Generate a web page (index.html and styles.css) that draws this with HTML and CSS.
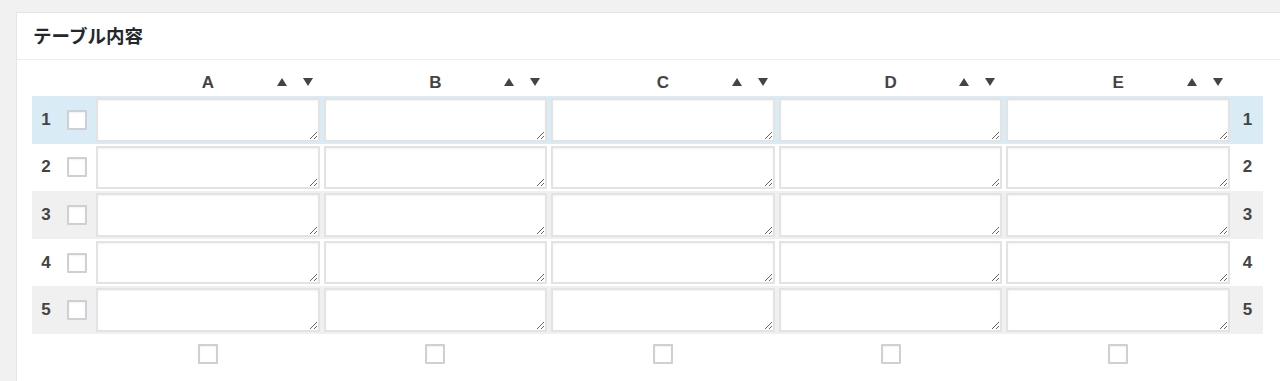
FILE: index.html
```html
<!DOCTYPE html>
<html>
<head>
	<meta charset="utf-8">
	<title>テーブル内容</title>
	<link rel="stylesheet" href="styles.css">
</head>
<body>
	<div class="postbox">
		<h2 class="postbox-title">テーブル内容</h2>

		<div class="inside">
			<table class="grid-table">
				<colgroup>
					<col class="col-num">
					<col class="col-check">
					<col class="col-data">
					<col class="col-data">
					<col class="col-data">
					<col class="col-data">
					<col class="col-data">
					<col class="col-num-right">
				</colgroup>

				<thead>
					<tr>
						<th></th>
						<th></th>
						<th><div class="col-head"><span></span><span class="col-name">A</span><span class="sort"><i class="up"></i><i class="down"></i></span></div></th>
						<th><div class="col-head"><span></span><span class="col-name">B</span><span class="sort"><i class="up"></i><i class="down"></i></span></div></th>
						<th><div class="col-head"><span></span><span class="col-name">C</span><span class="sort"><i class="up"></i><i class="down"></i></span></div></th>
						<th><div class="col-head"><span></span><span class="col-name">D</span><span class="sort"><i class="up"></i><i class="down"></i></span></div></th>
						<th><div class="col-head"><span></span><span class="col-name">E</span><span class="sort"><i class="up"></i><i class="down"></i></span></div></th>
						<th></th>
					</tr>
				</thead>

				<tbody>
					<tr class="row-active">
						<td class="num">1</td>
						<td class="check"><input type="checkbox" class="cb"></td>
						<td class="cell"><textarea></textarea></td>
						<td class="cell"><textarea></textarea></td>
						<td class="cell"><textarea></textarea></td>
						<td class="cell"><textarea></textarea></td>
						<td class="cell"><textarea></textarea></td>
						<td class="num">1</td>
					</tr>
					<tr>
						<td class="num">2</td>
						<td class="check"><input type="checkbox" class="cb"></td>
						<td class="cell"><textarea></textarea></td>
						<td class="cell"><textarea></textarea></td>
						<td class="cell"><textarea></textarea></td>
						<td class="cell"><textarea></textarea></td>
						<td class="cell"><textarea></textarea></td>
						<td class="num">2</td>
					</tr>
					<tr class="row-alt">
						<td class="num">3</td>
						<td class="check"><input type="checkbox" class="cb"></td>
						<td class="cell"><textarea></textarea></td>
						<td class="cell"><textarea></textarea></td>
						<td class="cell"><textarea></textarea></td>
						<td class="cell"><textarea></textarea></td>
						<td class="cell"><textarea></textarea></td>
						<td class="num">3</td>
					</tr>
					<tr>
						<td class="num">4</td>
						<td class="check"><input type="checkbox" class="cb"></td>
						<td class="cell"><textarea></textarea></td>
						<td class="cell"><textarea></textarea></td>
						<td class="cell"><textarea></textarea></td>
						<td class="cell"><textarea></textarea></td>
						<td class="cell"><textarea></textarea></td>
						<td class="num">4</td>
					</tr>
					<tr class="row-alt">
						<td class="num">5</td>
						<td class="check"><input type="checkbox" class="cb"></td>
						<td class="cell"><textarea></textarea></td>
						<td class="cell"><textarea></textarea></td>
						<td class="cell"><textarea></textarea></td>
						<td class="cell"><textarea></textarea></td>
						<td class="cell"><textarea></textarea></td>
						<td class="num">5</td>
					</tr>
				</tbody>

				<tfoot>
					<tr>
						<td></td>
						<td></td>
						<td class="foot-check"><input type="checkbox" class="cb"></td>
						<td class="foot-check"><input type="checkbox" class="cb"></td>
						<td class="foot-check"><input type="checkbox" class="cb"></td>
						<td class="foot-check"><input type="checkbox" class="cb"></td>
						<td class="foot-check"><input type="checkbox" class="cb"></td>
						<td></td>
					</tr>
				</tfoot>
			</table>
		</div>
	</div>
</body>
</html>
```

FILE: styles.css
```css
* {
	box-sizing: border-box;
}

body {
	margin: 0;
	background-color: #f1f1f1;
	font-family: "Liberation Sans", "Noto Sans CJK JP", sans-serif;
	color: #333;
	overflow: hidden;
}

/* Panel */
.postbox {
	margin: 12px -20px 0 16px;
	background-color: #fff;
	border: 1px solid #e5e5e5;
	min-height: 400px;
}

.postbox-title {
	margin: 0;
	padding: 0 16px;
	height: 47px;
	line-height: 48px;
	font-size: 18.5px;
	font-weight: bold;
	color: #23282d;
	border-bottom: 1px solid #eee;
}

.inside {
	padding: 0 15px;
}

/* Table */
.grid-table {
	width: 1231px;
	table-layout: fixed;
	border-collapse: collapse;
}

.col-num {
	width: 28px;
}

.col-check {
	width: 34px;
}

.col-data {
	width: 227.6px;
}

.col-num-right {
	width: 31px;
}

thead th {
	height: 36px;
	padding: 8px 0 0;
	font-size: 17px;
	font-weight: bold;
	color: #444;
}

.col-head {
	display: grid;
	grid-template-columns: 1fr auto 1fr;
	align-items: center;
}

.col-name {
	padding-top: 2px;
}

.sort {
	justify-self: end;
	display: flex;
	gap: 16px;
	margin-right: 9px;
}

.sort i {
	display: block;
	width: 0;
	height: 0;
	border-left: 5px solid transparent;
	border-right: 5px solid transparent;
}

.sort .up {
	border-bottom: 8px solid #444;
}

.sort .down {
	border-top: 8px solid #444;
}

tbody td {
	padding: 2px;
}

.row-active td {
	background-color: #d9ebf5;
}

.row-alt td {
	background-color: #f0f0f0;
}

.num {
	text-align: center;
	font-size: 17px;
	font-weight: bold;
	color: #444;
}

.check {
	text-align: center;
}

.cell textarea {
	display: block;
	width: 100%;
	height: 43.6px;
	margin: 0;
	border: 2px solid #e3e3e3;
	background-color: #fff;
	box-shadow: inset 0 1px 2px rgba(0, 0, 0, 0.05);
	font-family: "Liberation Sans", sans-serif;
	font-size: 14px;
}

.cb {
	appearance: none;
	-webkit-appearance: none;
	display: inline-block;
	vertical-align: middle;
	width: 20px;
	height: 20px;
	margin: 0;
	background-color: #fff;
	border: 2px solid #cdd1d5;
	border-radius: 1px;
	box-shadow: inset 0 1px 2px rgba(0, 0, 0, 0.06);
}

.foot-check {
	text-align: center;
	padding: 10px 0 0;
}
```
